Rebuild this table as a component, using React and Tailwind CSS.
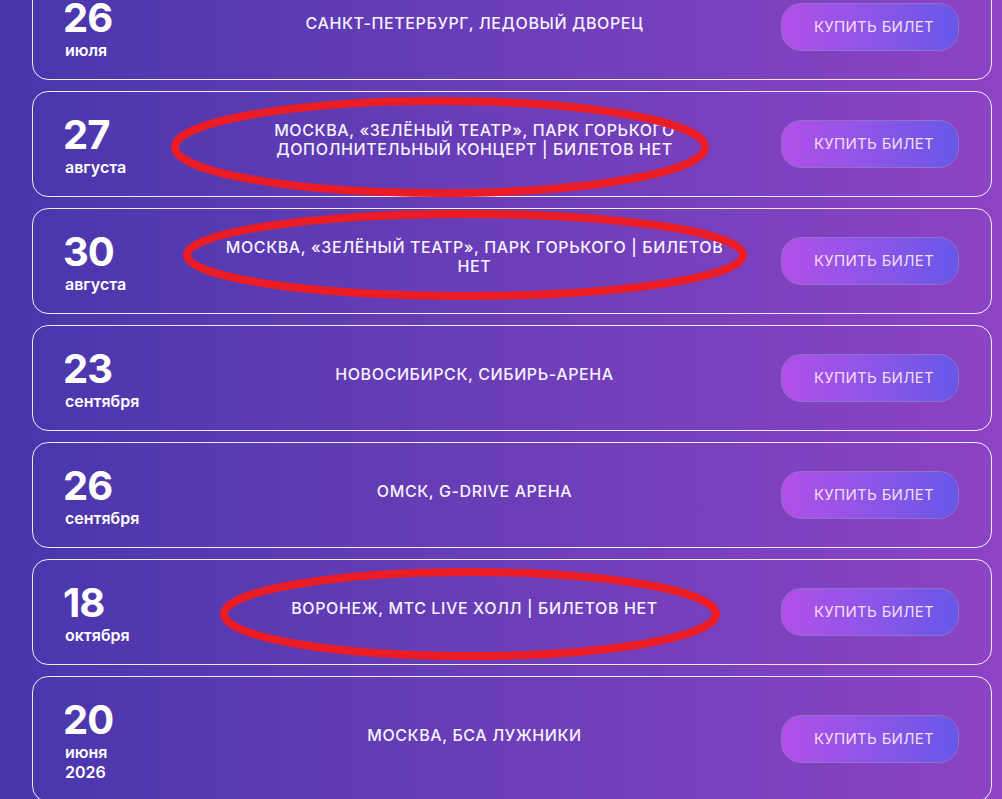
const concerts = [
  { day: '26', month: 'июля', title: ['САНКТ-ПЕТЕРБУРГ, ЛЕДОВЫЙ ДВОРЕЦ'] },
  { day: '27', month: 'августа', title: ['МОСКВА, «ЗЕЛЁНЫЙ ТЕАТР», ПАРК ГОРЬКОГО', 'ДОПОЛНИТЕЛЬНЫЙ КОНЦЕРТ | БИЛЕТОВ НЕТ'] },
  { day: '30', month: 'августа', title: ['МОСКВА, «ЗЕЛЁНЫЙ ТЕАТР», ПАРК ГОРЬКОГО | БИЛЕТОВ', 'НЕТ'] },
  { day: '23', month: 'сентября', title: ['НОВОСИБИРСК, СИБИРЬ-АРЕНА'] },
  { day: '26', month: 'сентября', title: ['ОМСК, G-DRIVE АРЕНА'] },
  { day: '18', month: 'октября', title: ['ВОРОНЕЖ, МТС LIVE ХОЛЛ | БИЛЕТОВ НЕТ'] },
  { day: '20', month: 'июня', year: '2026', title: ['МОСКВА, БСА ЛУЖНИКИ'] },
]

const ConcertRow = ({ concert }) => (
  <div className="flex items-center rounded-[16px] border border-white/90 px-8">
    <div className="w-[103px] shrink-0 self-start pt-[23px] pb-[19px] text-white whitespace-nowrap">
      <div className="-ml-0.5 text-[40px] font-bold leading-[40px] tracking-tight">{concert.day}</div>
      <div className="mt-0.5 text-[16px] font-semibold leading-[20px]">{concert.month}</div>
      {concert.year && <div className="text-[16px] font-semibold leading-[20px]">{concert.year}</div>}
    </div>
    <div className="flex-1 mb-2 text-center text-[16px] font-medium leading-[19px] tracking-[0.6px] text-[#f7f2ff] whitespace-nowrap">
      {concert.title.map((line, i) => (
        <div key={i}>{line}</div>
      ))}
    </div>
    <button className="h-[48px] w-[178px] shrink-0 rounded-[20px] border border-[#8c74c6] bg-gradient-to-r from-[#b24fe8] to-[#6657e8] pl-2 text-[15px] tracking-[0.3px] text-[#f3def6]">
      КУПИТЬ БИЛЕТ
    </button>
  </div>
)

const App = () => {
  return (
    <div
      className="relative h-[799px] w-[1002px] overflow-hidden bg-gradient-to-r from-[#4836ac] to-[#8d43c4]"
      style={{ fontFamily: 'Inter, "Noto Sans", sans-serif' }}
    >
      <div className="ml-8 mt-[-26px] flex w-[960px] flex-col gap-[11px]">
        {concerts.map((c, i) => (
          <ConcertRow key={i} concert={c} />
        ))}
      </div>

      <svg className="pointer-events-none absolute inset-0" width="1002" height="799" viewBox="0 0 1002 799">
        <ellipse cx="440" cy="147" rx="265" ry="46" fill="none" stroke="#ec1c24" strokeWidth="8" />
        <ellipse cx="465" cy="255" rx="278" ry="41" fill="none" stroke="#ec1c24" strokeWidth="8" />
        <ellipse cx="470" cy="614" rx="246" ry="42" fill="none" stroke="#ec1c24" strokeWidth="8" />
      </svg>
    </div>
  )
}

export default App
